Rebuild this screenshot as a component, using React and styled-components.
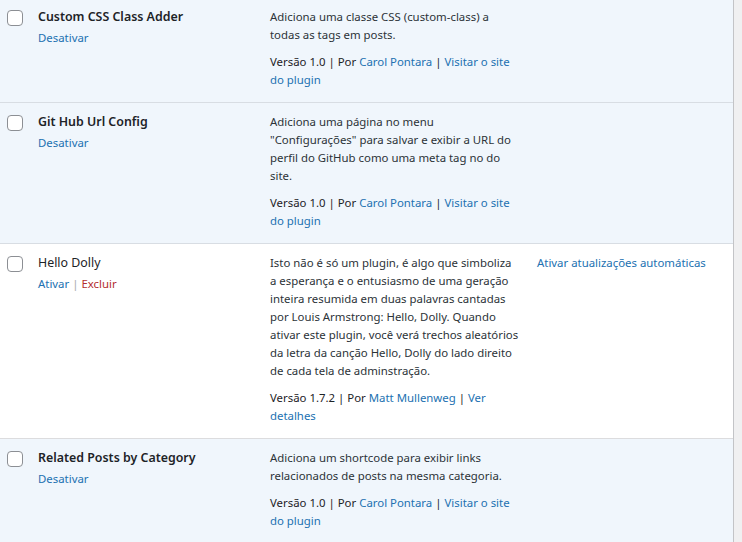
import styled, { createGlobalStyle } from "styled-components";

const GlobalStyle = createGlobalStyle`
  html, body {
    margin: 0;
    padding: 0;
    background: #f0f0f1;
  }
  body {
    font-family: "Noto Sans", "Open Sans", sans-serif;
    font-size: 11.4px;
    color: #1d2327;
  }
`;

const Table = styled.div`
  width: 733px;
  margin-top: -2px;
  background: #fff;
  border-right: 1px solid #c3c4c7;
`;

const Row = styled.div`
  display: grid;
  grid-template-columns: 28px 232px 267px 1fr;
  background: ${(p) => (p.$active ? "#f0f6fc" : "#fff")};
  border-bottom: 1px solid ${(p) => (p.$active ? "#d8dde3" : "#dcdcde")};
`;

const CheckCell = styled.div`
  padding: 12px 0 0 7px;
`;

const Checkbox = styled.span`
  display: block;
  width: 14px;
  height: 14px;
  border: 1px solid #8c8f94;
  border-radius: 4px;
  background: #fff;
`;

const TitleCell = styled.div`
  padding: 10px 10px 13px;
  line-height: 18px;
`;

const PluginName = styled.strong`
  display: block;
  font-size: 12.4px;
  font-weight: ${(p) => (p.$active ? 600 : 400)};
  color: #1d2327;
`;

const Actions = styled.div`
  margin-top: 3px;
  color: #a7aaad;
`;

const Link = styled.a`
  color: ${(p) => (p.$danger ? "#b32d2e" : "#2271b1")};
  text-decoration: none;
`;

const DescCell = styled.div`
  padding: 10px 7.5px 13px 10px;
  line-height: 18px;
  color: #2c3338;
`;

const Desc = styled.p`
  margin: 0 0 9px;
`;

const Meta = styled.div`
  color: #1d2327;
`;

const AutoCell = styled.div`
  padding: 10px 10px;
  line-height: 18px;
`;

const plugins = [
  {
    name: "Custom CSS Class Adder",
    active: true,
    desc: "Adiciona uma classe CSS (custom-class) a todas as tags em posts.",
    version: "1.0",
    author: "Carol Pontara",
    link: "Visitar o site do plugin",
  },
  {
    name: "Git Hub Url Config",
    active: true,
    desc: 'Adiciona uma página no menu "Configurações" para salvar e exibir a URL do perfil do GitHub como uma meta tag no do site.',
    version: "1.0",
    author: "Carol Pontara",
    link: "Visitar o site do plugin",
  },
  {
    name: "Hello Dolly",
    active: false,
    desc: "Isto não é só um plugin, é algo que simboliza a esperança e o entusiasmo de uma geração inteira resumida em duas palavras cantadas por Louis Armstrong: Hello, Dolly. Quando ativar este plugin, você verá trechos aleatórios da letra da canção Hello, Dolly do lado direito de cada tela de adminstração.",
    version: "1.7.2",
    author: "Matt Mullenweg",
    link: "Ver detalhes",
    auto: "Ativar atualizações automáticas",
  },
  {
    name: "Related Posts by Category",
    active: true,
    desc: "Adiciona um shortcode para exibir links relacionados de posts na mesma categoria.",
    version: "1.0",
    author: "Carol Pontara",
    link: "Visitar o site do plugin",
  },
];

export default function App() {
  return (
    <>
      <GlobalStyle />
      <Table>
        {plugins.map((p) => (
          <Row key={p.name} $active={p.active}>
            <CheckCell>
              <Checkbox />
            </CheckCell>
            <TitleCell>
              <PluginName $active={p.active}>{p.name}</PluginName>
              <Actions>
                {p.active ? (
                  <Link href="#">Desativar</Link>
                ) : (
                  <>
                    <Link href="#">Ativar</Link> | <Link href="#" $danger>Excluir</Link>
                  </>
                )}
              </Actions>
            </TitleCell>
            <DescCell>
              <Desc>{p.desc}</Desc>
              <Meta>
                Versão {p.version} | Por <Link href="#">{p.author}</Link> |{" "}
                <Link href="#">{p.link}</Link>
              </Meta>
            </DescCell>
            <AutoCell>{p.auto && <Link href="#">{p.auto}</Link>}</AutoCell>
          </Row>
        ))}
      </Table>
    </>
  );
}
